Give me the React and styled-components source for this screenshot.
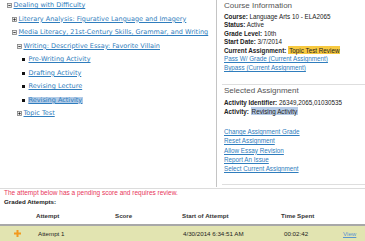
import React from 'react';
import styled, { createGlobalStyle } from 'styled-components';

const GlobalStyle = createGlobalStyle`
  html, body {
    margin: 0;
    padding: 0;
    background: #fff;
  }
  body {
    font-family: "Liberation Sans", Arial, sans-serif;
    color: #222;
  }
`;

const Page = styled.div`
  width: 365px;
  height: 241px;
  overflow: hidden;
`;

const Top = styled.div`
  display: flex;
  height: 188px;
  border-bottom: 1px solid #dcdcdc;
`;

const TreePane = styled.div`
  width: 216px;
  border-right: 1px solid #c4c4c4;
  margin-bottom: 1px;
`;

const TreeList = styled.ul`
  list-style: none;
  margin: -1px 0 0;
  padding: 0;
`;

const TreeRow = styled.li`
  display: flex;
  align-items: center;
  height: 13.5px;
  padding-left: ${(p) => 7 + p.$level * 5}px;
  font-family: "DejaVu Sans", Verdana, sans-serif;
  font-size: 6.5px;
  white-space: nowrap;
`;

const Toggle = styled.svg`
  width: 5px;
  height: 5px;
  margin-right: 1px;
  flex: none;
`;

const Bullet = styled.span`
  width: 3px;
  height: 3px;
  background: #111;
  margin-right: 3px;
  flex: none;
`;

const TreeLink = styled.a`
  color: #2f7dbd;
  text-decoration: underline;
  background: ${(p) => (p.$selected ? '#b3cce8' : 'transparent')};
  line-height: 7px;
  padding: 0 0.5px;
`;

const InfoPane = styled.div`
  flex: 1;
  padding-left: 5px;
  display: flex;
  flex-direction: column;
`;

const Section = styled.div`
  border-bottom: 1px solid #dedede;
  padding: ${(p) => p.$pad};
`;

const Heading = styled.div`
  font-size: 8px;
  line-height: 11px;
  color: #555;
  margin-left: 2px;
  margin-bottom: ${(p) => p.$gap}px;
`;

const Field = styled.div`
  font-size: 6.3px;
  line-height: 8.6px;
  margin-left: 2px;
  color: #222;
  white-space: nowrap;
`;

const Label = styled.b`
  font-weight: bold;
`;

const Mark = styled.span`
  background: ${(p) => p.$color};
  padding: 0.5px 1px;
`;

const ActionLink = styled.a`
  display: block;
  font-size: 6.3px;
  line-height: ${(p) => p.$lh || 8.6}px;
  margin-left: 2px;
  color: #2f7dbd;
  text-decoration: underline;
  white-space: nowrap;
`;

const Spacer = styled.div`
  height: ${(p) => p.$h}px;
`;

const Notice = styled.div`
  font-size: 6.5px;
  line-height: 8px;
  color: #e8365a;
  padding: 0 4px;
  white-space: nowrap;
`;

const SubTitle = styled.div`
  font-size: 6.2px;
  line-height: 9px;
  font-weight: bold;
  padding: 0 4px;
`;

const Grid = styled.div`
  display: grid;
  grid-template-columns: 34px 79px 67px 99px 60px 1fr;
  align-items: center;
  font-size: 6.2px;
  white-space: nowrap;
`;

const HeadRow = styled(Grid)`
  height: 17px;
  margin-top: 1px;
  border-bottom: 2px solid #a8a8a8;
  font-weight: bold;
  color: #333;
`;

const DataRow = styled(Grid)`
  height: 15px;
  background: #e2e4b1;
  color: #222;
`;

const Cell = styled.div`
  padding-left: ${(p) => p.$pad ?? 2}px;
  display: flex;
  align-items: center;
  justify-content: ${(p) => (p.$center ? 'center' : 'flex-start')};
`;

const ViewLink = styled.a`
  color: #5a95cf;
  text-decoration: underline;
`;

const Plus = () => (
  <svg width="7" height="7" viewBox="0 0 7 7">
    <rect x="0" y="2.5" width="7" height="2" fill="#f29a1f" />
    <rect x="2.5" y="0" width="2" height="7" fill="#f29a1f" />
  </svg>
);

const ToggleIcon = ({ open }) => (
  <Toggle viewBox="0 0 5 5">
    <rect x="0.5" y="0.5" width="4" height="4" fill="#eeeeee" stroke="#7f7f7f" strokeWidth="0.8" />
    <rect x="1.3" y="2.1" width="2.4" height="0.8" fill="#222" />
    {!open && <rect x="2.1" y="1.3" width="0.8" height="2.4" fill="#222" />}
  </Toggle>
);

const tree = [
  { level: 0, kind: 'open', text: 'Dealing with Difficulty' },
  { level: 1, kind: 'closed', text: 'Literary Analysis: Figurative Language and Imagery' },
  { level: 1, kind: 'open', text: 'Media Literacy, 21st-Century Skills, Grammar, and Writing' },
  { level: 2, kind: 'open', text: 'Writing: Descriptive Essay: Favorite Villain' },
  { level: 3, kind: 'leaf', text: 'Pre-Writing Activity' },
  { level: 3, kind: 'leaf', text: 'Drafting Activity' },
  { level: 3, kind: 'leaf', text: 'Revising Lecture' },
  { level: 3, kind: 'leaf', text: 'Revising Activity', selected: true },
  { level: 2, kind: 'closed', text: 'Topic Test' },
];

const actions = [
  'Change Assignment Grade',
  'Reset Assignment',
  'Allow Essay Revision',
  'Report An Issue',
  'Select Current Assignment',
];

export default function App() {
  return (
    <Page>
      <GlobalStyle />
      <Top>
        <TreePane>
          <TreeList>
            {tree.map((item) => (
              <TreeRow key={item.text} $level={item.level}>
                {item.kind === 'leaf' ? <Bullet /> : <ToggleIcon open={item.kind === 'open'} />}
                <TreeLink href="#" $selected={item.selected}>
                  {item.text}
                </TreeLink>
              </TreeRow>
            ))}
          </TreeList>
        </TreePane>

        <InfoPane>
          <Section $pad="0 0 11px">
            <Heading $gap={1.5}>Course Information</Heading>
            <Field><Label>Course:</Label> Language Arts 10 - ELA2065</Field>
            <Field><Label>Status:</Label> Active</Field>
            <Field><Label>Grade Level:</Label> 10th</Field>
            <Field><Label>Start Date:</Label> 3/7/2014</Field>
            <Field>
              <Label>Current Assignment:</Label> <Mark $color="#f7c940">Topic Test Review</Mark>
            </Field>
            <ActionLink href="#">Pass W/ Grade (Current Assignment)</ActionLink>
            <ActionLink href="#">Bypass (Current Assignment)</ActionLink>
          </Section>
          <Section $pad="0.5px 0 10px">
            <Heading $gap={3}>Selected Assignment</Heading>
            <Field><Label>Activity Identifier:</Label> 26349,2065,01030535</Field>
            <Field>
              <Label>Activity:</Label> <Mark $color="#b6cbe6">Revising Activity</Mark>
            </Field>
            <Spacer $h={10.8} />
            {actions.map((a) => (
              <ActionLink key={a} href="#" $lh={9.3}>{a}</ActionLink>
            ))}
          </Section>
        </InfoPane>
      </Top>

      <Notice>The attempt below has a pending score and requires review.</Notice>
      <SubTitle>Graded Attempts:</SubTitle>

      <HeadRow>
        <Cell />
        <Cell>Attempt</Cell>
        <Cell>Score</Cell>
        <Cell>Start of Attempt</Cell>
        <Cell>Time Spent</Cell>
        <Cell />
      </HeadRow>
      <DataRow>
        <Cell $pad={0} $center><Plus /></Cell>
        <Cell $pad={4}>Attempt 1</Cell>
        <Cell />
        <Cell $pad={3}>4/30/2014 6:34:51 AM</Cell>
        <Cell $pad={5}>00:02:42</Cell>
        <Cell $pad={4}><ViewLink href="#">View</ViewLink></Cell>
      </DataRow>
    </Page>
  );
}
